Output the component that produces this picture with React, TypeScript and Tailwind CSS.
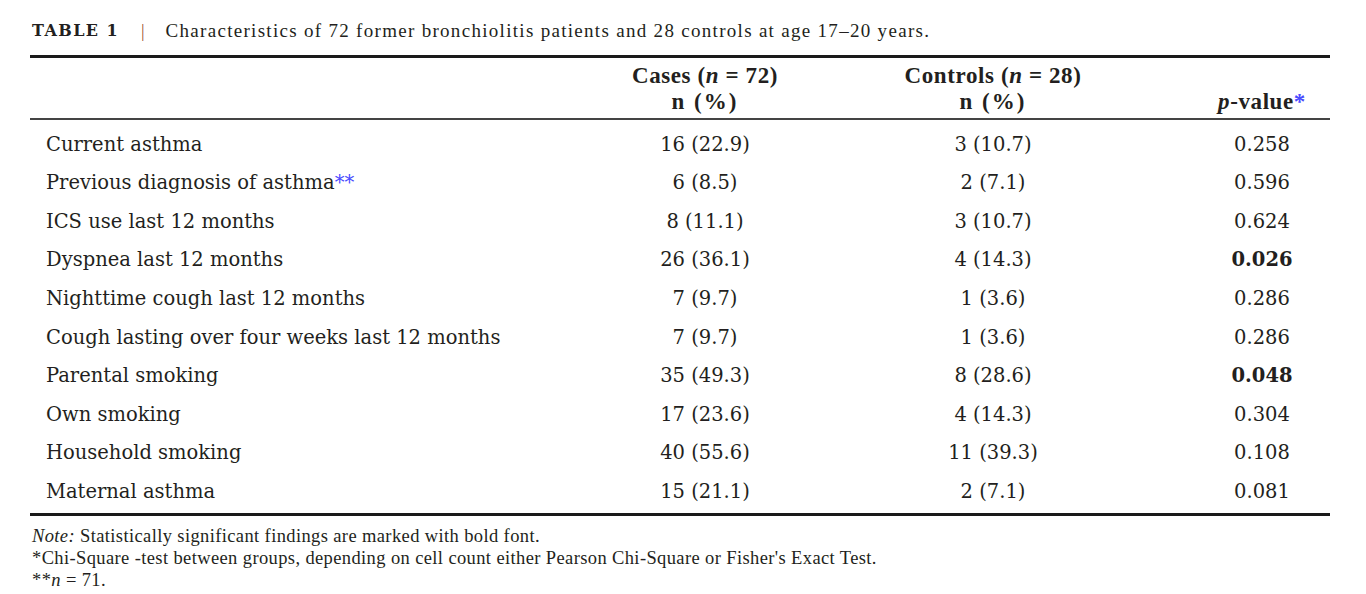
import React from "react";

type Row = {
    label: string;
    mark?: boolean;
    cases: string;
    controls: string;
    p: string;
    bold?: boolean;
};

const rows: Row[] = [
    { label: "Current asthma", cases: "16 (22.9)", controls: "3 (10.7)", p: "0.258" },
    { label: "Previous diagnosis of asthma", mark: true, cases: "6 (8.5)", controls: "2 (7.1)", p: "0.596" },
    { label: "ICS use last 12 months", cases: "8 (11.1)", controls: "3 (10.7)", p: "0.624" },
    { label: "Dyspnea last 12 months", cases: "26 (36.1)", controls: "4 (14.3)", p: "0.026", bold: true },
    { label: "Nighttime cough last 12 months", cases: "7 (9.7)", controls: "1 (3.6)", p: "0.286" },
    { label: "Cough lasting over four weeks last 12 months", cases: "7 (9.7)", controls: "1 (3.6)", p: "0.286" },
    { label: "Parental smoking", cases: "35 (49.3)", controls: "8 (28.6)", p: "0.048", bold: true },
    { label: "Own smoking", cases: "17 (23.6)", controls: "4 (14.3)", p: "0.304" },
    { label: "Household smoking", cases: "40 (55.6)", controls: "11 (39.3)", p: "0.108" },
    { label: "Maternal asthma", cases: "15 (21.1)", controls: "2 (7.1)", p: "0.081" },
];

const body = "font-['DejaVu_Serif',serif] text-[19.5px]";
const times = "font-['Liberation_Serif',serif]";

export default function App() {
    return (
        <div className="w-[1366px] h-[594px] bg-white text-[#231f20] pl-[30px] pt-[19px]">
            <div className="w-[1300px]">
                {/* Caption */}
                <div className="flex items-center h-6 pl-[2px]">
                    <span className="font-['DejaVu_Serif',serif] font-bold text-[16px] tracking-[1.4px]">TABLE 1</span>
                    <span className={`${times} text-[18px] text-[#a0522d] ml-[22px]`}>|</span>
                    <span className={`${times} text-[19px] tracking-[1.3px] ml-[21px]`}>
                        Characteristics of 72 former bronchiolitis patients and 28 controls at age 17–20 years.
                    </span>
                </div>

                <div className="mt-3 h-[3px] bg-[#1a1a1a]" />

                {/* Header */}
                <div className={`grid grid-cols-[530px_290px_286px_194px] pt-[5px] pb-[3px] ${times} font-bold text-[23px] leading-[26px] tracking-[0.6px]`}>
                    <div />
                    <div className="text-center">
                        <div>Cases (<i>n</i> = 72)</div>
                        <div className="tracking-[2px]">n (%)</div>
                    </div>
                    <div className="text-center">
                        <div>Controls (<i>n</i> = 28)</div>
                        <div className="tracking-[2px]">n (%)</div>
                    </div>
                    <div className="text-center pl-[58px]">
                        <div>&nbsp;</div>
                        <div>
                            <i>p</i>-value<span className="text-[#4b4bff]">*</span>
                        </div>
                    </div>
                </div>

                <div className="h-[2px] bg-[#444]" />

                {/* Rows */}
                <div className="pt-[5px]">
                    {rows.map((r) => (
                        <div
                            key={r.label}
                            className={`grid grid-cols-[530px_290px_286px_194px] h-[38.6px] items-center ${body}`}
                        >
                            <div className="pl-4">
                                {r.label}
                                {r.mark && <span className="text-[#4b4bff]">**</span>}
                            </div>
                            <div className="text-center">{r.cases}</div>
                            <div className="text-center">{r.controls}</div>
                            <div className={`text-center pl-[58px] ${r.bold ? "font-bold" : ""}`}>{r.p}</div>
                        </div>
                    ))}
                </div>

                <div className="mt-[2px] h-[3px] bg-[#1a1a1a]" />

                {/* Notes */}
                <div className={`${times} text-[18.5px] tracking-[0.38px] leading-[22px] pt-[9px] pl-[2px]`}>
                    <div>
                        <i>Note:</i> Statistically significant findings are marked with bold font.
                    </div>
                    <div>*Chi-Square -test between groups, depending on cell count either Pearson Chi-Square or Fisher's Exact Test.</div>
                    <div>
                        **<i>n</i> = 71.
                    </div>
                </div>
            </div>
        </div>
    );
}
